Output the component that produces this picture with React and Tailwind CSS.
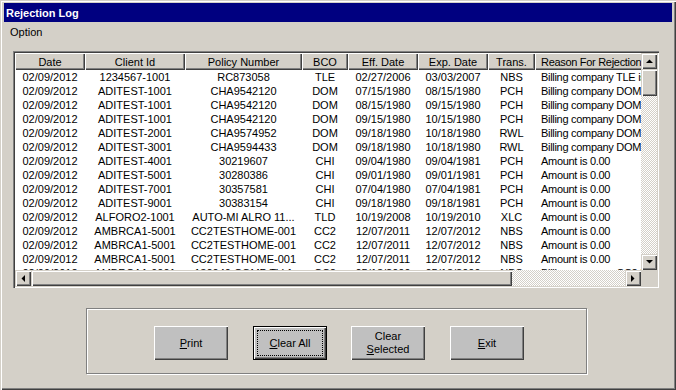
import React from 'react';

const COLS = [
	{ label: 'Date', w: 'w-[70px]' },
	{ label: 'Client Id', w: 'w-[100px]' },
	{ label: 'Policy Number', w: 'w-[117px]' },
	{ label: 'BCO', w: 'w-[46px]' },
	{ label: 'Eff. Date', w: 'w-[70px]' },
	{ label: 'Exp. Date', w: 'w-[70px]' },
	{ label: 'Trans.', w: 'w-[47px]' },
	{ label: 'Reason For Rejection', w: 'w-[260px]' },
];

const DOM = 'Billing company DOM is inactive';
const ZERO = 'Amount is 0.00';

const ROWS = [
	['02/09/2012', '1234567-1001', 'RC873058', 'TLE', '02/27/2006', '03/03/2007', 'NBS', 'Billing company TLE is inactive'],
	['02/09/2012', 'ADITEST-1001', 'CHA9542120', 'DOM', '07/15/1980', '08/15/1980', 'PCH', DOM],
	['02/09/2012', 'ADITEST-1001', 'CHA9542120', 'DOM', '08/15/1980', '09/15/1980', 'PCH', DOM],
	['02/09/2012', 'ADITEST-1001', 'CHA9542120', 'DOM', '09/15/1980', '10/15/1980', 'PCH', DOM],
	['02/09/2012', 'ADITEST-2001', 'CHA9574952', 'DOM', '09/18/1980', '10/18/1980', 'RWL', DOM],
	['02/09/2012', 'ADITEST-3001', 'CHA9594433', 'DOM', '09/18/1980', '10/18/1980', 'RWL', DOM],
	['02/09/2012', 'ADITEST-4001', '30219607', 'CHI', '09/04/1980', '09/04/1981', 'PCH', ZERO],
	['02/09/2012', 'ADITEST-5001', '30280386', 'CHI', '09/01/1980', '09/01/1981', 'PCH', ZERO],
	['02/09/2012', 'ADITEST-7001', '30357581', 'CHI', '07/04/1980', '07/04/1981', 'PCH', ZERO],
	['02/09/2012', 'ADITEST-9001', '30383154', 'CHI', '09/18/1980', '09/18/1981', 'PCH', ZERO],
	['02/09/2012', 'ALFORO2-1001', 'AUTO-MI ALRO 11...', 'TLD', '10/19/2008', '10/19/2010', 'XLC', ZERO],
	['02/09/2012', 'AMBRCA1-5001', 'CC2TESTHOME-001', 'CC2', '12/07/2011', '12/07/2012', 'NBS', ZERO],
	['02/09/2012', 'AMBRCA1-5001', 'CC2TESTHOME-001', 'CC2', '12/07/2011', '12/07/2012', 'NBS', ZERO],
	['02/09/2012', 'AMBRCA1-5001', 'CC2TESTHOME-001', 'CC2', '12/07/2011', '12/07/2012', 'NBS', ZERO],
	['02/09/2012', 'AMBRCA1-9001', '130040 COMP TV 1', 'CC2', '05/13/2009', '05/13/2009', 'NBS', 'Billing company CC2 is inactive'],
];

const raised = 'shadow-[inset_1px_1px_0_#d4d0c8,inset_2px_2px_0_#ffffff,inset_-1px_-1px_0_#404040,inset_-2px_-2px_0_#808080]';
const checker = 'bg-[repeating-conic-gradient(#ffffff_0_25%,#d4d0c8_0_50%)] bg-[length:2px_2px]';

const Arrow = ({ dir }) => {
	const pts = {
		up: '0,4 7,4 3.5,0.5',
		down: '0,0 7,0 3.5,3.5',
		left: '4,0 4,7 0.5,3.5',
		right: '0,0 0,7 3.5,3.5',
	}[dir];
	const vertical = dir === 'up' || dir === 'down';
	return (
		<div className={`w-4 h-4 bg-[#d4d0c8] flex items-center justify-center ${raised}`}>
			<svg width={vertical ? 7 : 4} height={vertical ? 4 : 7} viewBox={vertical ? '0 0 7 4' : '0 0 4 7'}>
				<polygon points={pts} fill="#000" />
			</svg>
		</div>
	);
};

const Button = ({ children, isDefault }) => (
	<div className={`w-[74px] h-[34px] bg-[#c0c0c0] flex items-center justify-center text-center leading-[13px] ${isDefault ? 'border border-black shadow-[inset_1px_1px_0_#ffffff,inset_-1px_-1px_0_#404040,inset_-2px_-2px_0_#808080] p-[3px]' : 'shadow-[inset_1px_1px_0_#ffffff,inset_-1px_-1px_0_#404040,inset_-2px_-2px_0_#808080]'}`}>
		{isDefault ? (
			<div className="w-full h-full border border-dotted border-black flex items-center justify-center">{children}</div>
		) : children}
	</div>
);

export default function App() {
	return (
		<div className="w-[676px] h-[390px] bg-[#d4d0c8] flex flex-col pt-[3px] px-[4px] text-[11px] text-black font-['Liberation_Sans',Arial,sans-serif] shadow-[inset_1px_1px_0_#d4d0c8,inset_2px_2px_0_#ffffff,inset_-1px_-1px_0_#404040,inset_-2px_-2px_0_#808080] overflow-hidden">
			<div className="h-[19px] bg-[#000080] text-white font-bold pl-[2px] flex items-center leading-[14px]">Rejection Log</div>
			<div className="h-[19px] pl-[6px] flex items-center leading-[14px]">Option</div>

			{/* list view */}
			<div className="mt-[10px] ml-[9px] w-[646px] h-[237px] p-[2px] bg-white shadow-[inset_1px_1px_0_#808080,inset_2px_2px_0_#404040,inset_-1px_-1px_0_#ffffff,inset_-2px_-2px_0_#d4d0c8]">
				<div className="grid grid-cols-[626px_16px] grid-rows-[217px_16px]">
					<div className="overflow-hidden bg-white">
						<div className="flex h-[17px] w-max">
							{COLS.map(c => (
								<div key={c.label} className={`${c.w} shrink-0 bg-[#d4d0c8] flex items-center leading-[14px] whitespace-nowrap overflow-hidden ${c.label.startsWith('Reason') ? 'justify-start pl-[6px] tracking-[-0.3px]' : 'justify-center'} shadow-[inset_1px_1px_0_#ffffff,inset_-1px_-1px_0_#404040,inset_-2px_-2px_0_#808080]`}>
									{c.label}
								</div>
							))}
						</div>
						{ROWS.map((r, i) => (
							<div key={i} className="flex h-[14px] w-max leading-[14px]">
								{r.map((v, j) => (
									<div key={j} className={`${COLS[j].w} shrink-0 whitespace-nowrap overflow-hidden ${j === 7 ? 'pl-[6px] text-left tracking-[-0.3px]' : 'text-center'}`}>{v}</div>
								))}
							</div>
						))}
					</div>

					{/* vertical scroll */}
					<div className="flex flex-col">
						<Arrow dir="up" />
						<div className={`h-[27px] bg-[#d4d0c8] ${raised}`} />
						<div className={`flex-1 ${checker}`} />
						<Arrow dir="down" />
					</div>

					{/* horizontal scroll */}
					<div className="flex">
						<Arrow dir="left" />
						<div className={`w-[481px] bg-[#d4d0c8] ${raised}`} />
						<div className={`flex-1 ${checker}`} />
						<Arrow dir="right" />
					</div>
					<div className="bg-[#d4d0c8]" />
				</div>
			</div>

			{/* button group */}
			<div className="mt-[20px] ml-[82px] w-[501px] h-[66px] border border-[#808080] shadow-[inset_1px_1px_0_#ffffff,1px_1px_0_#ffffff] flex items-start pt-[17px] pl-[67px]">
				<Button><span><u>P</u>rint</span></Button>
				<div className="ml-[25px]">
					<Button isDefault><span><u>C</u>lear All</span></Button>
				</div>
				<div className="ml-[24px]">
					<Button><span>Clear<br /><u>S</u>elected</span></Button>
				</div>
				<div className="ml-[25px]">
					<Button><span><u>E</u>xit</span></Button>
				</div>
			</div>
		</div>
	);
}
